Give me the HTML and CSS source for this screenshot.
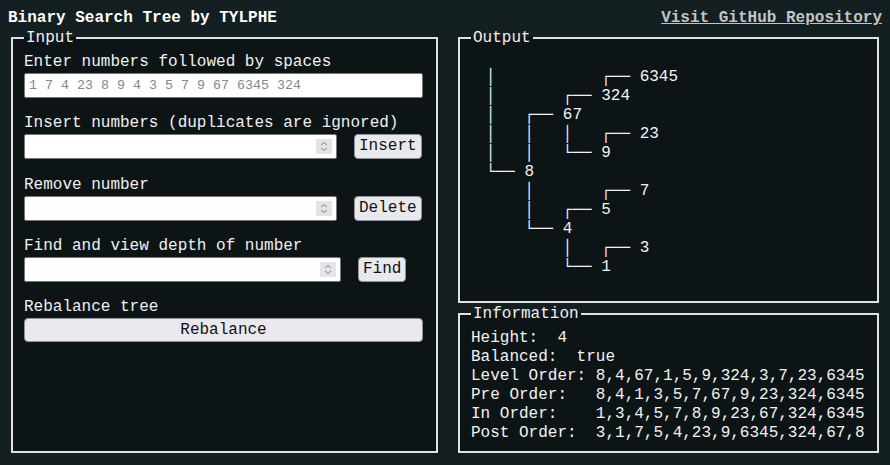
FILE: index.html
```html
<!DOCTYPE html>
<html lang="en">
<head>
<meta charset="utf-8">
<title>Binary Search Tree by TYLPHE</title>
<link rel="stylesheet" href="styles.css">
</head>
<body>
<header class="top">
  <h1 class="title">Binary Search Tree by TYLPHE</h1>
  <a class="repo" href="#">Visit GitHub Repository</a>
</header>
<main class="layout">
  <fieldset class="panel input-panel">
    <legend class="legend">Input</legend>
    <div class="group">
      <label class="label">Enter numbers followed by spaces</label>
      <input class="text-input" type="text" placeholder="1 7 4 23 8 9 4 3 5 7 9 67 6345 324">
    </div>
    <div class="group">
      <label class="label">Insert numbers (duplicates are ignored)</label>
      <div class="row">
        <div class="numbox w313"><input class="num" type="text"><span class="spin"><svg width="16" height="15" viewBox="0 0 16 15"><rect width="16" height="15" fill="#e4e4e8"/><path d="M5 6 L8 3.5 L11 6" fill="none" stroke="#a4a4a8" stroke-width="1.1"/><path d="M5 9 L8 11.5 L11 9" fill="none" stroke="#a4a4a8" stroke-width="1.1"/></svg></span></div>
        <button class="btn" type="button">Insert</button>
      </div>
    </div>
    <div class="group">
      <label class="label">Remove number</label>
      <div class="row">
        <div class="numbox w313"><input class="num" type="text"><span class="spin"><svg width="16" height="15" viewBox="0 0 16 15"><rect width="16" height="15" fill="#e4e4e8"/><path d="M5 6 L8 3.5 L11 6" fill="none" stroke="#a4a4a8" stroke-width="1.1"/><path d="M5 9 L8 11.5 L11 9" fill="none" stroke="#a4a4a8" stroke-width="1.1"/></svg></span></div>
        <button class="btn" type="button">Delete</button>
      </div>
    </div>
    <div class="group">
      <label class="label">Find and view depth of number</label>
      <div class="row">
        <div class="numbox w317"><input class="num" type="text"><span class="spin"><svg width="16" height="15" viewBox="0 0 16 15"><rect width="16" height="15" fill="#e4e4e8"/><path d="M5 6 L8 3.5 L11 6" fill="none" stroke="#a4a4a8" stroke-width="1.1"/><path d="M5 9 L8 11.5 L11 9" fill="none" stroke="#a4a4a8" stroke-width="1.1"/></svg></span></div>
        <button class="btn" type="button">Find</button>
      </div>
    </div>
    <div class="group">
      <label class="label">Rebalance tree</label>
      <button class="btn btn-wide" type="button">Rebalance</button>
    </div>
  </fieldset>
  <div class="right-col">
    <fieldset class="panel output-panel">
      <legend class="legend">Output</legend>
<pre class="tree">│           ┌── 6345
│       ┌── 324
│   ┌── 67
│   │   │   ┌── 23
│   │   └── 9
└── 8
    │       ┌── 7
    │   ┌── 5
    └── 4
        │   ┌── 3
        └── 1</pre>
    </fieldset>
    <fieldset class="panel info-panel">
      <legend class="legend">Information</legend>
<pre class="info">Height:  4
Balanced:  true
Level Order: 8,4,67,1,5,9,324,3,7,23,6345
Pre Order:   8,4,1,3,5,7,67,9,23,324,6345
In Order:    1,3,4,5,7,8,9,23,67,324,6345
Post Order:  3,1,7,5,4,23,9,6345,324,67,8</pre>
    </fieldset>
  </div>
</main>
</body>
</html>
```
FILE: styles.css
```css
html, body {
  height: 100%;
}
body {
  margin: 8px;
  background: #131f20;
  color: #f0f0f0;
  font-family: "Liberation Mono", "DejaVu Sans Mono", monospace;
  font-size: 16px;
  line-height: 19px;
}
.top {
  display: flex;
  justify-content: space-between;
  align-items: flex-start;
  box-sizing: border-box;
  height: 19px;
  padding-top: 1px;
}
.title {
  margin: 0;
  font-size: 16px;
  font-weight: bold;
  line-height: 19px;
  color: #ffffff;
}
.repo {
  font-weight: bold;
  line-height: 19px;
  color: #c4c4c4;
  text-decoration: underline;
}
.layout {
  display: grid;
  grid-template-columns: 427px 421px;
  column-gap: 20px;
  margin-left: 3px;
  height: 426px;
}
.panel {
  margin: 0;
  border: 2px solid #e2e2e2;
  padding: 5px 11px 0 11px;
  background: #0c1416;
  min-width: 0;
}
.legend {
  padding: 2px 2px 0 2px;
  line-height: 19px;
}
.group {
  display: flex;
  flex-direction: column;
  align-items: flex-start;
  margin-bottom: 16.3px;
}
.label {
  display: block;
  line-height: 19px;
}
.text-input {
  box-sizing: border-box;
  margin-top: 1px;
  width: 399px;
  height: 25px;
  border: 1px solid #767676;
  border-radius: 2px;
  background: #ffffff;
  padding: 0 4px;
  font-family: "Liberation Mono", monospace;
  font-size: 13.33px;
  color: #000;
}
.text-input::placeholder {
  color: #8a8684;
}
.row {
  display: flex;
  align-items: stretch;
  margin-top: 1px;
}
.numbox {
  box-sizing: border-box;
  display: flex;
  align-items: center;
  height: 25px;
  border: 1px solid #767676;
  border-radius: 2px;
  background: #ffffff;
  padding: 0 4px 0 4px;
}
.w313 { width: 313px; }
.w317 { width: 317px; }
.num {
  flex: 1;
  min-width: 0;
  border: 0;
  outline: none;
  padding: 0;
  background: transparent;
  font-family: "Liberation Mono", monospace;
  font-size: 13.33px;
}
.spin {
  display: flex;
  width: 16px;
  height: 15px;
}
.btn {
  box-sizing: border-box;
  height: 25px;
  margin-left: 17px;
  padding: 0 4px;
  border: 1px solid #8f8f9d;
  border-radius: 4px;
  background: #e9e9ed;
  color: #111;
  font-family: "Liberation Mono", monospace;
  font-size: 16px;
  line-height: 19px;
}
.btn-wide {
  margin: 1px 0 0 0;
  width: 399px;
  height: 24px;
}
.right-col {
  display: flex;
  flex-direction: column;
}
.output-panel {
  height: 276px;
  box-sizing: border-box;
  padding-top: 0;
}
.tree {
  margin: 20px 0 0 15px;
  font-family: "Liberation Mono", "DejaVu Sans Mono", monospace;
  font-size: 16px;
  line-height: 19px;
  color: #f2f2f2;
}
.info-panel {
  flex: 1;
}
.info {
  margin: 0;
  font-family: "Liberation Mono", monospace;
  font-size: 16px;
  line-height: 19px;
  color: #f2f2f2;
}
```
